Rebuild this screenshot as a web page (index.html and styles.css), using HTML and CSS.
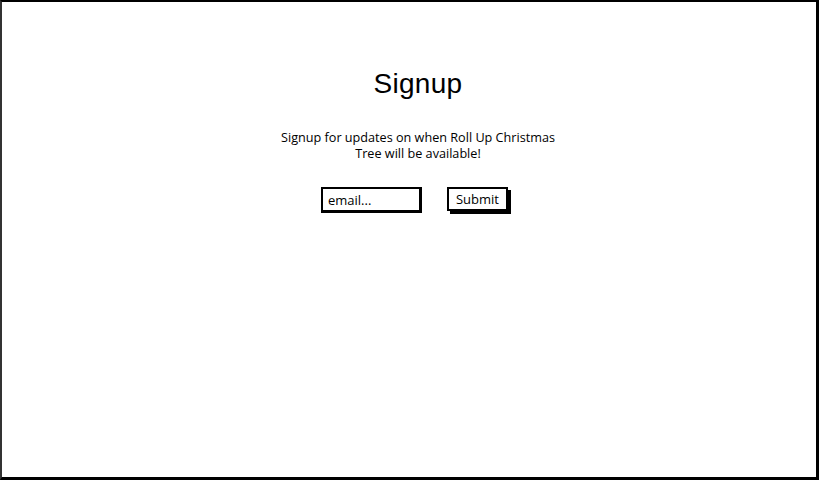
FILE: index.html
```html
<!DOCTYPE html>
<html>
<head>
<meta charset="utf-8">
<link rel="stylesheet" href="styles.css">
</head>
<body>
<div class="frame">
  <h1 class="title">Signup</h1>
  <p class="lead">Signup for updates on when Roll Up Christmas<br>Tree will be available!</p>
  <form class="form">
    <div class="input">email...</div>
    <div class="button">Submit</div>
  </form>
</div>
</body>
</html>
```
FILE: styles.css
```css
html, body {
  margin: 0;
  padding: 0;
  background: #fff;
}
body {
  width: 820px;
  height: 481px;
  font-family: "Liberation Sans", Arial, sans-serif;
  color: #000;
}
.frame {
  box-sizing: border-box;
  width: 819px;
  height: 480px;
  padding-left: 18px;
  border-top: 2px solid #000;
  border-left: 2px solid #333;
  border-right: 3px solid #000;
  border-bottom: 3px solid #000;
  display: flex;
  flex-direction: column;
  align-items: center;
}
.title {
  margin: 66px 0 0 0;
  font-weight: normal;
  font-size: 28px;
  line-height: 32px;
  letter-spacing: 0.3px;
}
.lead {
  margin: 29px 0 0 0;
  font-family: "Open Sans", sans-serif;
  font-size: 12.65px;
  line-height: 16px;
  text-align: center;
}
.form {
  margin: 26px 4px 0 0;
  display: flex;
  gap: 25px;
  align-items: flex-start;
}
.input {
  box-sizing: border-box;
  width: 101px;
  height: 26px;
  border: 2px solid #000;
  border-right-width: 3px;
  border-bottom-width: 3px;
  padding: 3px 5px;
  font-family: "Open Sans", sans-serif;
  font-size: 13px;
  line-height: 17px;
}
.button {
  box-sizing: border-box;
  width: 61px;
  height: 24px;
  margin-right: 3px;
  border: 2px solid #000;
  box-shadow: 3px 3px 0 #000;
  padding: 1px 0;
  text-align: center;
  font-family: "Open Sans", sans-serif;
  font-size: 13px;
  line-height: 18px;
}
```
